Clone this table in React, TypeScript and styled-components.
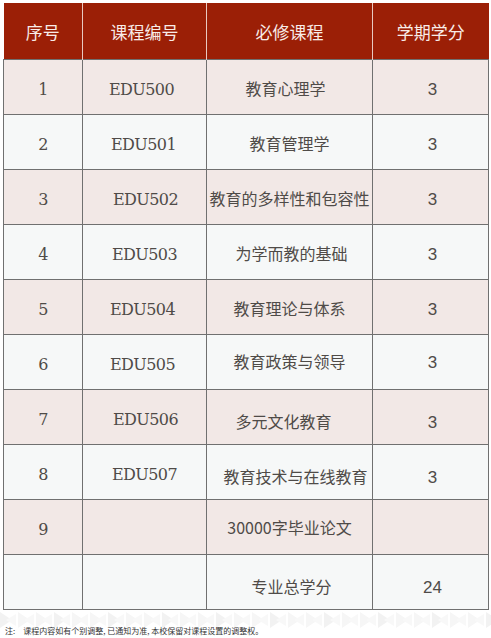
import { FC } from "react"
import styled, { createGlobalStyle } from "styled-components"

const GlobalStyle = createGlobalStyle`
  body {
    margin: 0;
    background: #ffffff;
    font-family: "Noto Sans CJK SC", "Noto Sans", sans-serif;
  }
`

const Page = styled.div`
  width: 491px;
  height: 638px;
  padding: 3px 0 0 3px;
  box-sizing: border-box;
  display: flex;
  flex-direction: column;
  overflow: hidden;
`

const Table = styled.table`
  width: 485px;
  border-collapse: collapse;
  table-layout: fixed;
`

const HeadCell = styled.th`
  height: 56px;
  padding: 0;
  background: #9b1f06;
  color: #f8ece8;
  font-family: "Noto Sans CJK SC", sans-serif;
  font-size: 17px;
  font-weight: 400;
  text-align: center;
  border-left: 1px solid #e9c9c0;
  &:first-child {
    border-left: none;
  }
`

const Row = styled.tr<{ $odd: boolean }>`
  height: 55px;
  background: ${({ $odd }) => ($odd ? "#f2e8e6" : "#f6f8f8")};
`

const Cell = styled.td<{ $kind: "serif" | "cjk" | "sans" }>`
  padding: 0;
  border: 1.5px solid #707070;
  color: #4f4b48;
  text-align: center;
  vertical-align: middle;
  font-size: ${({ $kind }) => ($kind === "cjk" ? "16px" : $kind === "sans" ? "17px" : "16px")};
  font-family: ${({ $kind }) =>
    $kind === "serif"
      ? `"DejaVu Serif", "Liberation Serif", serif`
      : $kind === "sans"
      ? `"Liberation Sans", Arial, sans-serif`
      : `"Noto Sans CJK SC", sans-serif`};
  letter-spacing: ${({ $kind }) => ($kind === "serif" ? "-0.6px" : "0")};
`

const Shift = styled.span<{ $x?: number; $y?: number }>`
  display: inline-block;
  transform: translate(${({ $x }) => $x ?? 0}px, ${({ $y }) => $y ?? 0}px);
`

const Footer = styled.div`
  position: relative;
  flex: 1;
  margin-left: -3px;
`

const Pattern = styled.svg`
  display: block;
  width: 491px;
  height: 30px;
`

const Note = styled.div`
  position: absolute;
  left: 5px;
  top: 15px;
  font-size: 8px;
  color: #333;
  font-family: "Noto Sans CJK SC", sans-serif;
  white-space: nowrap;
`

const NoteLabel = styled.span`
  margin-right: 8px;
`

type Course = {
  no: string
  code: string
  name: string
  credit: string
  nx?: number
  cy?: number
  cx?: number
}

const courses: Course[] = [
  { no: "1", code: "EDU500", name: "教育心理学", credit: "3", nx: -4, cy: 1, cx: -3 },
  { no: "2", code: "EDU501", name: "教育管理学", credit: "3", cy: 1, cx: -1 },
  { no: "3", code: "EDU502", name: "教育的多样性和包容性", credit: "3", cy: 1, cx: 1 },
  { no: "4", code: "EDU503", name: "为学而教的基础", credit: "3", nx: 2, cy: 1, cx: 0 },
  { no: "5", code: "EDU504", name: "教育理论与体系", credit: "3", cy: 1, cx: -2 },
  { no: "6", code: "EDU505", name: "教育政策与领导", credit: "3", cy: -1, cx: -2 },
  { no: "7", code: "EDU506", name: "多元文化教育", credit: "3", nx: -6, cy: 4, cx: 1 },
  { no: "8", code: "EDU507", name: "教育技术与在线教育", credit: "3", nx: 6, cy: 4, cx: 0 },
  { no: "9", code: "", name: "30000字毕业论文", credit: "" },
  { no: "", code: "", name: "专业总学分", credit: "24", nx: 2, cy: 4 },
]

const TrianglePattern: FC = () => {
  const tris = []
  for (let i = 0; i < 28; i++) {
    const x = i * 18
    const fill = i % 3 === 0 ? "#f2f2f2" : "#f6f6f6"
    tris.push(
      <polygon key={`a${i}`} points={`${x},2 ${x + 12},10 ${x},18`} fill={fill} />,
      <polygon key={`b${i}`} points={`${x + 16},4 ${x + 6},10 ${x + 16},16`} fill="#f8f8f8" />
    )
  }
  return (
    <Pattern viewBox="0 0 491 30">
      {tris}
    </Pattern>
  )
}

export default function App() {
  return (
    <>
      <GlobalStyle />
      <Page>
        <Table>
          <colgroup>
            <col style={{ width: 79 }} />
            <col style={{ width: 124 }} />
            <col style={{ width: 166 }} />
            <col style={{ width: 116 }} />
          </colgroup>
          <thead>
            <tr>
              <HeadCell>序号</HeadCell>
              <HeadCell>课程编号</HeadCell>
              <HeadCell>必修课程</HeadCell>
              <HeadCell>学期学分</HeadCell>
            </tr>
          </thead>
          <tbody>
            {courses.map((c, i) => (
              <Row key={i} $odd={i % 2 === 0}>
                <Cell $kind="serif">
                  <Shift $y={2}>{c.no}</Shift>
                </Cell>
                <Cell $kind="serif">
                  <Shift $x={c.cx} $y={2}>{c.code}</Shift>
                </Cell>
                <Cell $kind="cjk">
                  <Shift $x={c.nx} $y={c.cy}>{c.name}</Shift>
                </Cell>
                <Cell $kind="sans">
                  <Shift $x={2} $y={(c.cy ?? 0) + 2}>{c.credit}</Shift>
                </Cell>
              </Row>
            ))}
          </tbody>
        </Table>
        <Footer>
          <TrianglePattern />
          <Note>
            <NoteLabel>注:</NoteLabel>
            课程内容如有个别调整, 已通知为准, 本校保留对课程设置的调整权。
          </Note>
        </Footer>
      </Page>
    </>
  )
}
